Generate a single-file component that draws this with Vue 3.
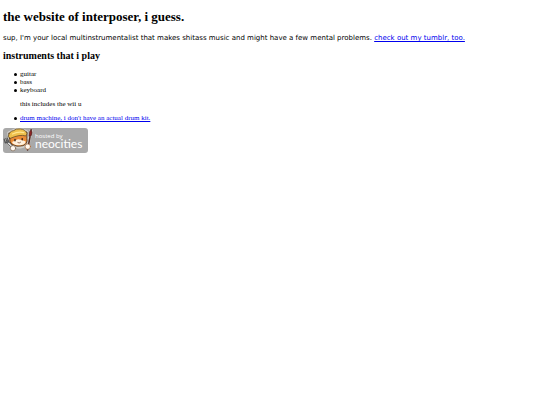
<script setup>
const instruments = ['guitar', 'bass', 'keyboard']
</script>

<template>
  <main class="page">
    <h1>the website of interposer, i guess.</h1>
    <p class="intro">
      sup, I'm your local multinstrumentalist that makes shitass music and might have a few mental problems.
      <a href="#tumblr">check out my tumblr, too.</a>
    </p>
    <h2>instruments that i play</h2>
    <ul>
      <li v-for="name in instruments" :key="name">
        {{ name }}
        <p v-if="name === 'keyboard'" class="note">this includes the wii u</p>
      </li>
      <li><a href="#drums">drum machine, i don't have an actual drum kit.</a></li>
    </ul>
    <a class="badge" href="#neocities" aria-label="hosted by neocities">
      <svg width="85" height="25" viewBox="0 0 85 25">
        <rect width="85" height="25" rx="3" fill="#a9a9a9" />
        <g stroke-linecap="round" stroke-linejoin="round">
          <path d="M7 10 6 5 10 3Q16 0 23.5 4L24 11Q25 16 20 18Q13 20 9 17ZM10 20 3 12M24 19 28 3" fill="none" stroke="#d2d0cc" stroke-width="3.6" />
          <path d="M10 19.5 3.8 13.5" stroke="#444" stroke-width="2.6" />
          <path d="M10 19.5 4 13.7" stroke="#eee" stroke-width="1.3" />
          <path d="M1.2 11.2 2.2 14.8 5.8 13.8 4.2 10.2M2.8 10.6 4 13.7" fill="none" stroke="#555" stroke-width="1.2" />
          <path d="M24.5 22 27 9" stroke="#542b22" stroke-width="1.5" />
          <path d="M26 8Q25.7 4 28.2 1Q29.9 5 28 8Z" fill="#8e2323" stroke="#4c2523" stroke-width=".7" />
          <path d="M6.7 10.5 5.8 5 10 5.4Q15.3 1.6 20.2 4.3L24 4 23.9 10.5Q25 16 19.8 17.7Q13.6 19.3 9.2 16.5Q6.1 14.5 6.7 10.5Z" fill="#e98b36" stroke="#51351e" stroke-width=".9" />
          <path d="M9 14Q12.2 12.6 15 11.3Q19.1 11.8 22.6 13.4Q22.5 16.2 18.8 17Q13.6 18 10 15.7Z" fill="#fff0dc" />
          <path d="M5.3 8.5Q6.2 3 10.7 2.6Q12.6.5 17.3.9Q22.7 1.4 24 5.8L22.7 8Q17 6 7.5 10.3Z" fill="#eec04c" stroke="#67502b" stroke-width=".8" />
          <path d="M9.5 6Q15.2 3 20.8 4.6" fill="none" stroke="#ffe58e" stroke-width="1.3" />
          <path d="M12 11.5V12.7M19.2 10.6V11.8" stroke="#322019" stroke-width="1.4" />
          <path d="M14.8 14.6Q16.2 15.8 17.6 14.3" fill="none" stroke="#703e2b" stroke-width=".7" />
          <circle cx="10" cy="20.2" r="2.7" fill="#fff8f0" stroke="#75614f" stroke-width=".7" />
          <circle cx="24.8" cy="18.6" r="2.7" fill="#fff8f0" stroke="#a66a3c" stroke-width=".7" />
        </g>
        <text class="hosted" x="32" y="10">hosted by</text>
        <text class="brand" x="32" y="20">neocities</text>
      </svg>
    </a>
  </main>
</template>

<style>
body {
  margin: 0;
  background: #fff;
}
</style>

<style scoped>
.page {
  padding: 9px 3px;
  color: #000;
  font: 7px/8px "Liberation Serif", serif;
}
h1 {
  margin: 0 0 9px;
  font-size: 13px;
  line-height: 16px;
}
.intro {
  margin: 0 0 8px;
  font-family: "DejaVu Sans", sans-serif;
}
h2 {
  margin: 0 0 8px;
  font-size: 10px;
  line-height: 12px;
}
ul {
  margin: 0 0 6px;
  padding-left: 17px;
  list-style: none;
}
li::before {
  content: "";
  display: inline-block;
  width: 3px;
  height: 3px;
  margin: 0 3px 0 -6px;
  border-radius: 50%;
  background: #000;
}
.note {
  margin: 6px 0;
}
a {
  color: #0000ee;
}
.badge {
  display: block;
  width: fit-content;
}
.badge svg {
  display: block;
}
.hosted,
.brand {
  fill: #fff;
}
.hosted {
  font-family: "Open Sans", sans-serif;
  font-size: 6px;
}
.brand {
  font-family: Lato, sans-serif;
  font-size: 12px;
}
</style>
